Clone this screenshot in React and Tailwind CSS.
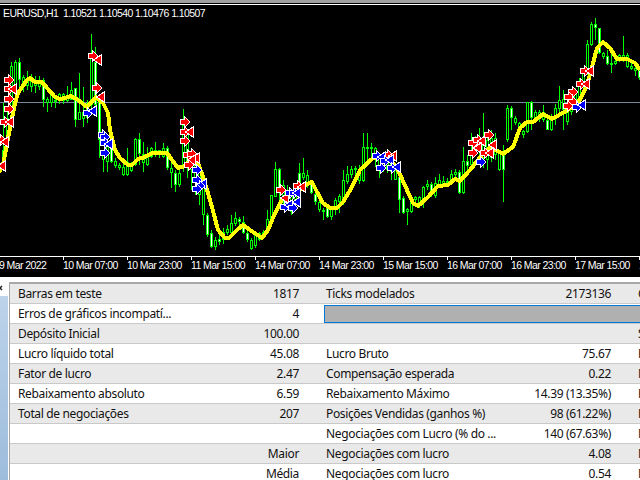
const candles = [
  [3, 103, 168, 150, 168, 0], [7, 108, 150, 118, 140, 0], [11, 62, 112, 66, 110, 0], [15, 60, 95, 62, 92, 0],
  [19, 58, 92, 62, 80, 1], [23, 75, 92, 77, 87, 0], [27, 71, 90, 78, 86, 0], [31, 74, 92, 77, 87, 0],
  [35, 76, 93, 80, 86, 0], [39, 76, 90, 80, 87, 0], [43, 78, 107, 80, 100, 1], [47, 97, 112, 99, 103, 0],
  [51, 94, 107, 95, 103, 0], [55, 98, 108, 100, 102, 0], [59, 93, 104, 94, 101, 0], [63, 93, 104, 94, 101, 0],
  [67, 86, 102, 95, 101, 0], [71, 82, 100, 90, 100, 0], [75, 88, 127, 88, 120, 1], [79, 73, 113, 112, 120, 0],
  [83, 87, 127, 112, 119, 0], [87, 100, 123, 103, 118, 0], [91, 34, 110, 56, 105, 0], [95, 47, 108, 62, 105, 1],
  [99, 95, 158, 100, 140, 1], [103, 152, 172, 155, 160, 0], [107, 140, 172, 142, 162, 0], [111, 145, 163, 147, 162, 1],
  [115, 158, 168, 161, 166, 0], [119, 163, 170, 165, 168, 0], [123, 158, 176, 167, 175, 0], [127, 148, 176, 162, 175, 0],
  [131, 162, 172, 165, 171, 0], [135, 138, 166, 139, 165, 0], [139, 133, 165, 139, 154, 1], [143, 142, 172, 154, 163, 0],
  [147, 147, 166, 154, 165, 0], [151, 147, 158, 148, 157, 0], [155, 142, 157, 150, 153, 0], [159, 150, 158, 150, 155, 0],
  [163, 143, 158, 148, 157, 0], [167, 146, 170, 148, 168, 1], [171, 157, 188, 168, 173, 0], [175, 170, 192, 173, 185, 1],
  [179, 167, 187, 173, 185, 0], [183, 109, 172, 125, 168, 0], [187, 130, 178, 133, 165, 0], [191, 150, 190, 152, 170, 0],
  [195, 155, 195, 160, 180, 0], [199, 165, 205, 170, 195, 0], [203, 175, 225, 180, 215, 0], [207, 213, 237, 215, 235, 1],
  [211, 230, 248, 233, 247, 1], [215, 237, 250, 240, 247, 0], [219, 235, 245, 239, 242, 1], [223, 228, 244, 232, 240, 0],
  [227, 225, 235, 229, 233, 0], [231, 215, 236, 223, 233, 0], [235, 212, 226, 218, 224, 0], [239, 217, 226, 219, 222, 1],
  [243, 216, 234, 222, 233, 1], [247, 230, 242, 233, 240, 1], [251, 238, 250, 240, 249, 0], [255, 233, 248, 235, 246, 0],
  [259, 232, 241, 233, 240, 0], [263, 230, 239, 232, 238, 0], [267, 210, 234, 219, 233, 0], [271, 195, 222, 195, 220, 0],
  [275, 162, 197, 169, 197, 0], [279, 168, 207, 169, 192, 1], [283, 180, 205, 185, 197, 0], [287, 185, 205, 192, 205, 0],
  [291, 192, 215, 195, 212, 0], [295, 186, 210, 190, 205, 0], [299, 163, 188, 173, 185, 1], [303, 158, 180, 173, 178, 0],
  [307, 170, 188, 175, 183, 0], [311, 180, 194, 182, 193, 1], [315, 192, 205, 194, 202, 1], [319, 198, 212, 202, 210, 0],
  [323, 208, 220, 210, 212, 0], [327, 205, 218, 208, 217, 1], [331, 206, 220, 208, 217, 0], [335, 198, 215, 200, 207, 0],
  [339, 194, 213, 196, 202, 0], [343, 170, 205, 180, 200, 0], [347, 166, 184, 174, 182, 0], [351, 166, 178, 169, 175, 0],
  [355, 166, 182, 168, 170, 0], [359, 165, 184, 169, 181, 0], [363, 133, 182, 147, 181, 0], [367, 133, 163, 147, 149, 0],
  [371, 143, 157, 147, 149, 0], [375, 147, 167, 148, 155, 0], [379, 155, 178, 156, 167, 0], [383, 160, 172, 160, 168, 0],
  [387, 158, 173, 162, 170, 0], [391, 162, 180, 163, 172, 0], [395, 168, 180, 170, 180, 0], [399, 174, 213, 177, 200, 1],
  [403, 196, 214, 198, 213, 1], [407, 208, 225, 209, 212, 0], [411, 198, 213, 200, 212, 0], [415, 196, 203, 197, 200, 0],
  [419, 196, 208, 197, 203, 0], [423, 186, 208, 187, 202, 0], [427, 180, 190, 184, 187, 0], [431, 182, 197, 184, 195, 1],
  [435, 177, 198, 183, 196, 0], [439, 174, 186, 180, 185, 0], [443, 176, 186, 181, 185, 0], [447, 178, 186, 181, 183, 0],
  [451, 170, 184, 174, 183, 0], [455, 169, 178, 172, 175, 0], [459, 170, 194, 172, 193, 1], [463, 147, 194, 161, 193, 0],
  [467, 155, 172, 161, 166, 1], [471, 133, 168, 153, 165, 0], [475, 136, 155, 140, 152, 0], [479, 128, 158, 140, 152, 0],
  [483, 113, 168, 138, 158, 0], [487, 132, 170, 140, 160, 0], [491, 130, 162, 138, 158, 0], [495, 133, 160, 138, 155, 0],
  [499, 150, 171, 153, 170, 0], [503, 145, 202, 152, 170, 1], [507, 105, 142, 108, 140, 0], [511, 106, 130, 108, 118, 1],
  [515, 116, 125, 118, 123, 0], [519, 122, 135, 123, 132, 0], [523, 130, 138, 131, 135, 0], [527, 102, 133, 102, 132, 0],
  [531, 101, 130, 102, 118, 1], [535, 110, 122, 112, 118, 0], [539, 110, 122, 112, 118, 0], [543, 105, 122, 112, 120, 0],
  [547, 118, 130, 120, 130, 1], [551, 114, 131, 118, 130, 0], [555, 104, 125, 108, 118, 0], [559, 86, 112, 100, 109, 0],
  [563, 90, 130, 99, 110, 0], [567, 110, 125, 112, 122, 0], [571, 105, 115, 107, 112, 0], [575, 88, 108, 92, 106, 0],
  [579, 78, 100, 83, 98, 0], [583, 70, 90, 72, 85, 0], [587, 40, 75, 44, 73, 0], [591, 22, 46, 24, 45, 0],
  [595, 18, 40, 24, 28, 1], [599, 28, 54, 28, 53, 1], [603, 52, 59, 53, 57, 0], [607, 50, 65, 56, 64, 1],
  [611, 53, 73, 63, 65, 0], [615, 58, 65, 61, 64, 0], [619, 54, 62, 55, 60, 0], [623, 36, 62, 55, 58, 0],
  [627, 53, 68, 55, 67, 0], [631, 60, 70, 66, 69, 0], [635, 62, 76, 68, 71, 0], [639, 67, 80, 70, 78, 1],
];

const line = "-1,172 3,165 8,138 12,118 15,103 18,93 22,87 27,80 30,78 35,82 42,82 47,88 55,97 60,99 65,98 71,96 78,100 87,107 96,97 103,103 108,113 110,130 115,150 120,158 128,165 132,165 138,159 145,157 152,153 162,153 167,153 172,160 178,168 185,166 190,160 197,160 203,177 207,190 212,207 218,230 225,238 229,238 237,230 243,225 250,230 262,238 268,230 275,213 282,200 288,195 298,192 305,185 312,182 317,192 323,203 330,208 337,208 343,202 352,187 360,170 373,158 385,157 391,160 398,170 407,190 413,203 418,206 428,197 438,186 448,185 455,179 460,181 470,170 482,155 490,147 503,154 513,147 520,128 527,122 533,122 543,114 552,119 568,110 580,100 587,85 592,67 597,48 603,42 610,48 617,59 627,59 635,63 640,70";

// r = arrow pointing right, l = closing triangle
const redMarks = [
  [9, 80, "r"], [9, 89, "r"], [13, 89, "l"], [9, 99, "r"], [9, 109, "r"], [5, 122, "r"], [10, 122, "l"], [1, 140, "r"], [5, 142, "l"], [2, 166, "l"],
  [93, 56, "r"], [98, 60, "l"], [97, 88, "r"], [101, 97, "l"],
  [185, 122, "r"], [185, 132, "r"], [190, 132, "l"], [185, 141, "r"], [188, 155, "r"], [192, 154, "r"], [196, 158, "l"], [192, 160, "l"], [189, 165, "r"],
  [281, 190, "r"], [285, 198, "l"], [298, 186, "r"], [302, 187, "l"],
  [388, 155, "r"], [393, 156, "l"],
  [473, 143, "r"], [478, 140, "r"], [482, 141, "l"], [478, 148, "l"], [473, 153, "r"], [489, 135, "r"], [493, 145, "l"], [485, 153, "r"], [490, 153, "l"],
  [573, 92, "r"], [569, 97, "r"], [573, 102, "r"], [568, 106, "r"], [581, 84, "r"], [586, 84, "l"], [585, 71, "r"], [590, 71, "l"],
];
const blueMarks = [
  [88, 113, "r"], [93, 111, "l"], [103, 135, "r"], [105, 137, "r"], [105, 143, "r"], [109, 144, "l"], [105, 153, "r"],
  [197, 170, "r"], [197, 180, "r"], [203, 184, "l"], [200, 186, "r"], [197, 189, "r"],
  [290, 193, "r"], [294, 193, "r"], [297, 193, "l"], [297, 202, "l"], [285, 207, "r"], [289, 205, "l"], [293, 208, "r"],
  [377, 156, "r"], [382, 157, "l"], [385, 161, "r"], [390, 160, "l"], [381, 168, "r"], [392, 168, "r"], [397, 167, "l"],
  [481, 162, "r"], [577, 107, "r"], [582, 105, "l"],
];

const ARROW = "M-4-2H0V-4.5L4.5 0 0 4.5V2H-4Z";
const TRIANGLE = "M3-4.5V4.5L-3.5 0Z";

function Marks({ items, color }) {
  return items.map(([x, y, kind], i) => (
    <path
      key={i}
      d={kind === "r" ? ARROW : TRIANGLE}
      transform={`translate(${x} ${y})`}
      fill={color}
      stroke="#fff"
      strokeWidth={2}
      paintOrder="stroke"
    />
  ));
}

function Chart() {
  return (
    <svg className="block w-[640px] h-[251px]" viewBox="0 5 640 251" shapeRendering="crispEdges">
      <rect x="0" y="102" width="640" height="1" fill="#778899" />
      {candles.map(([x, high, low, top, bot, white]) => (
        <g key={x}>
          <rect x={x} y={high} width="1" height={low - high} fill="#00ff00" />
          <rect x={x - 1} y={top} width="3" height={bot - top} fill="#00ff00" />
          {bot - top > 2 && (
            <rect x={x} y={top + 1} width="1" height={bot - top - 2} fill={white ? "#fff" : "#000"} />
          )}
        </g>
      ))}
      <polyline points={line} fill="none" stroke="#ffff00" strokeWidth={4} strokeLinejoin="round" />
      <Marks items={redMarks} color="#ff0000" />
      <Marks items={blueMarks} color="#0000ff" />
    </svg>
  );
}

const axisLabels = [
  "9 Mar 2022", "10 Mar 07:00", "10 Mar 23:00", "11 Mar 15:00", "14 Mar 07:00",
  "14 Mar 23:00", "15 Mar 15:00", "16 Mar 07:00", "16 Mar 23:00", "17 Mar 15:00", "18 Mar 07:00",
];

const rows = [
  ["Barras em teste", "1817", "Ticks modelados", "2173136", "Correlação"],
  ["Erros de gráficos incompatí...", "4", null, null, null],
  ["Depósito Inicial", "100.00", "", "", "Spread"],
  ["Lucro líquido total", "45.08", "Lucro Bruto", "75.67", "Perda Bruta"],
  ["Fator de lucro", "2.47", "Compensação esperada", "0.22", "Nível de Margem"],
  ["Rebaixamento absoluto", "6.59", "Rebaixamento Máximo", "14.39 (13.35%)", "Rebaixamento Relativo"],
  ["Total de negociações", "207", "Posições Vendidas (ganhos %)", "98 (61.22%)", "Posições Compradas"],
  ["", "", "Negociações com Lucro (% do ...", "140 (67.63%)", "Negociações com Perda"],
  ["", "Maior", "Negociações com lucro", "4.08", "Negociações com perda"],
  ["", "Média", "Negociações com lucro", "0.54", "Negociações com perda"],
];

function Row({ row, shaded }) {
  const [label, value, label2, value2, label3] = row;
  return (
    <div className={`flex h-[20px] shrink-0 items-center border-b border-[#c9c9c9] overflow-hidden whitespace-nowrap ${shaded ? "bg-[#e9e9e9]" : "bg-white"}`}>
      <div className="flex w-[314px] shrink-0 justify-between pl-2 pr-[25px]">
        <span>{label}</span>
        <span>{value}</span>
      </div>
      {label2 === null ? (
        <div className="h-[18px] w-[330px] shrink-0 border border-[#0078d7] bg-[#b0b0b0]" />
      ) : (
        <>
          <div className="flex w-[314px] shrink-0 justify-between pl-[2px] pr-[27px]">
            <span>{label2}</span>
            <span>{value2}</span>
          </div>
          <span>{label3}</span>
        </>
      )}
    </div>
  );
}

export default function App() {
  return (
    <div className="flex h-[480px] w-[640px] flex-col overflow-hidden bg-white text-[12px] tracking-[-0.35px] text-[#111] font-['Noto_Sans',sans-serif]">
      <div className="h-[3px] shrink-0 bg-[#a0a0a0]" />
      <div className="h-px shrink-0 bg-black" />
      <div className="h-px shrink-0 bg-white" />

      {/* Chart */}
      <div className="relative h-[272px] shrink-0 bg-black font-['Liberation_Sans',sans-serif] text-[10.5px] leading-[14px] tracking-[-0.6px] text-white">
        <Chart />
        <div className="absolute left-[3px] top-px whitespace-pre">EURUSD,H1  1.10521 1.10540 1.10476 1.10507</div>
        <div className="-ml-px flex border-t border-white">
          {axisLabels.map((label) => (
            <div key={label} className="relative h-[20px] w-[64px] shrink-0 whitespace-nowrap pt-px">
              <div className="absolute left-0 top-0 h-[3px] w-px bg-white" />
              {label}
            </div>
          ))}
        </div>
      </div>
      <div className="h-[5px] shrink-0 bg-white" />

      {/* Report */}
      <div className="flex min-h-0 flex-1">
        <div className="flex w-[9px] shrink-0 flex-col">
          <svg className="mt-[3px] h-[7px] w-[9px]" viewBox="0 0 9 7">
            <path d="M-2 1l4 4M2 1l-4 4" stroke="#222" strokeWidth={1.5} />
          </svg>
          <div className="mr-px mt-[4px] flex-1 bg-gradient-to-b from-[#bdd3ea] to-[#9dbcdc]" />
        </div>
        <div className="flex min-w-0 flex-1 flex-col border-l border-t-2 border-[#a8a8a8]">
          {rows.map((row, i) => (
            <Row key={i} row={row} shaded={i % 2 === 0} />
          ))}
        </div>
      </div>
    </div>
  );
}
